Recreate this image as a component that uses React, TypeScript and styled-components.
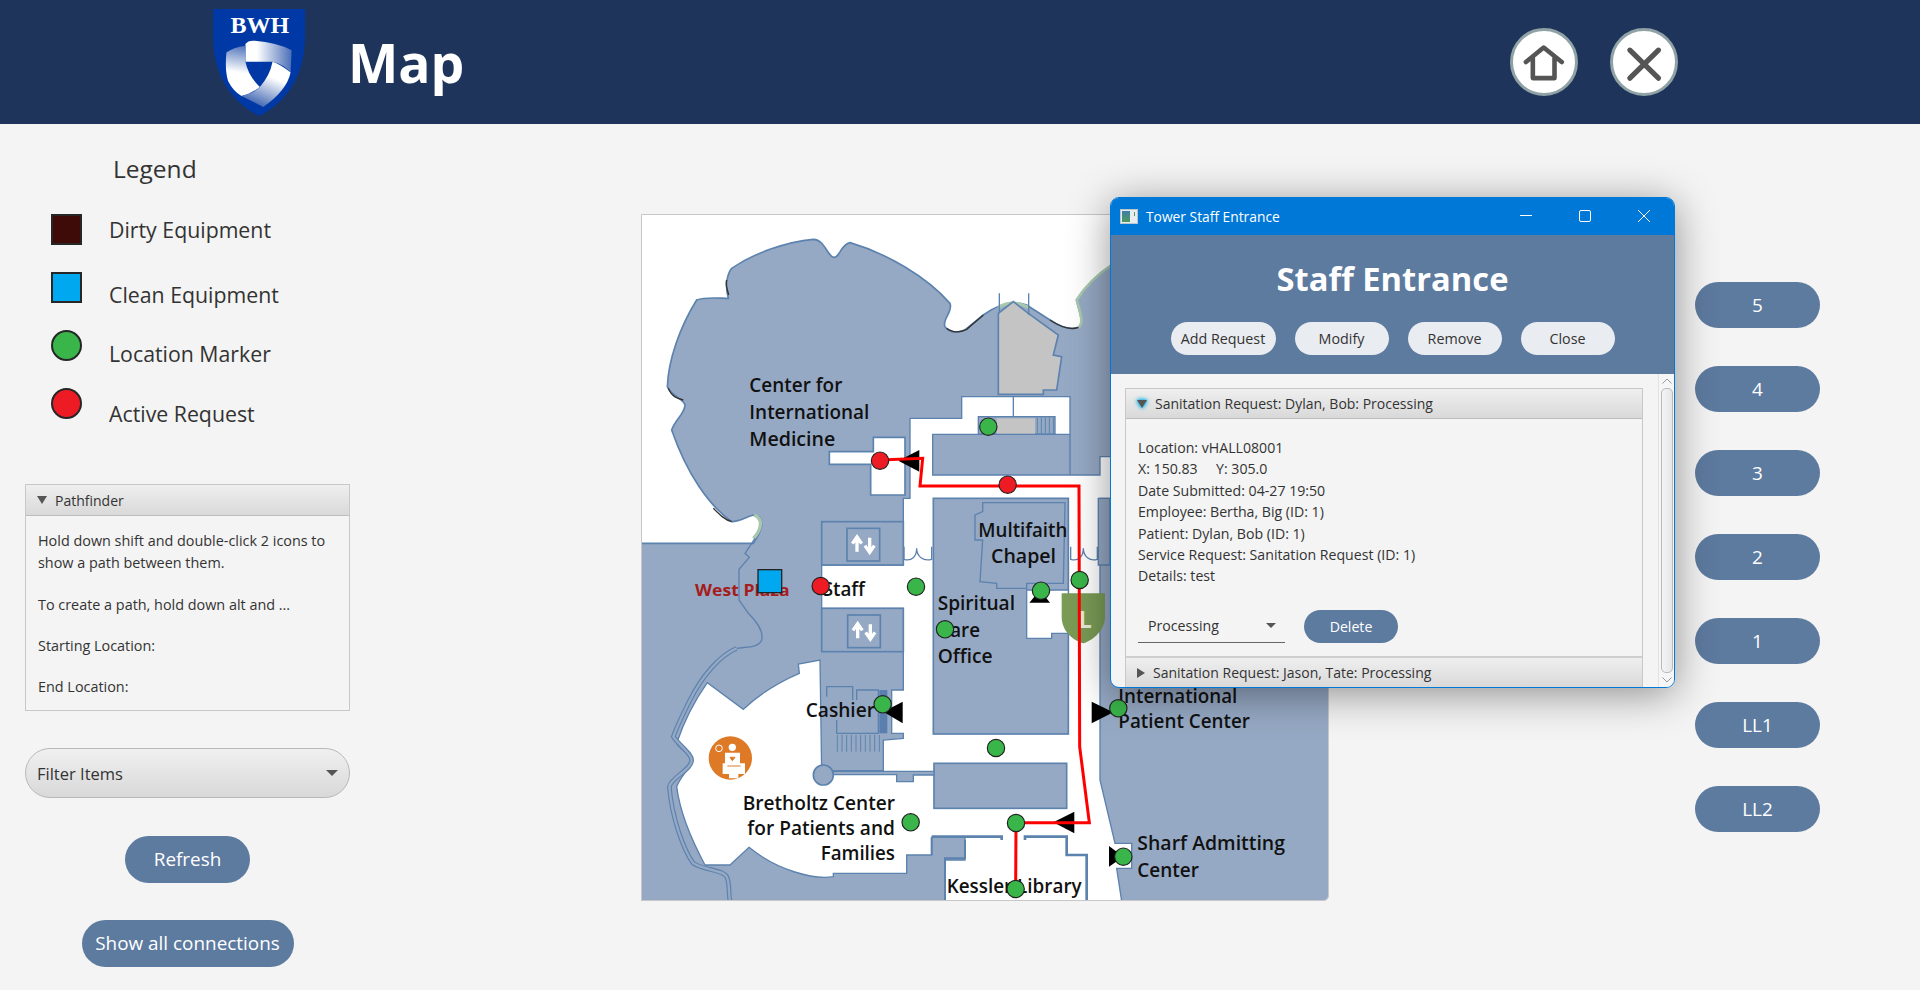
import React from 'react';
import styled, { createGlobalStyle } from 'styled-components';

const GlobalStyle = createGlobalStyle`
  html, body {
    margin: 0;
    padding: 0;
    background: #f4f4f4;
  }
  body {
    font-family: "Open Sans", "Noto Sans", sans-serif;
    color: #333;
    overflow: hidden;
  }
`;

const Page = styled.div`
  position: relative;
  width: 1920px;
  height: 990px;
  overflow: hidden;
  background: #f4f4f4;
`;

const Header = styled.header`
  display: flex;
  align-items: center;
  box-sizing: border-box;
  height: 124px;
  padding: 0 242px 0 213px;
  background: #1f345b;
`;

const Title = styled.h1`
  margin: 0 0 0 43px;
  font-size: 53.4px;
  font-weight: 700;
  color: #fff;
`;

const HeaderActions = styled.div`
  display: flex;
  gap: 32px;
  margin-left: auto;
`;

const RoundButton = styled.button`
  display: flex;
  align-items: center;
  justify-content: center;
  box-sizing: border-box;
  width: 68px;
  height: 68px;
  padding: 0;
  border: 3px solid #8fa2a6;
  border-radius: 50%;
  background: #fff;
`;

const Body = styled.main`
  display: grid;
  grid-template-columns: 641px 688px 1fr;
  height: 866px;
`;

const LeftColumn = styled.aside`
  box-sizing: border-box;
  padding: 28px 0 0 25px;
  width: 350px;
`;

const LegendTitle = styled.div`
  margin: 0 0 28px 88px;
  font-size: 24.5px;
  line-height: 34px;
  color: #333;
`;

const LegendRow = styled.div`
  display: flex;
  height: 58px;
  padding-left: 26px;
`;

const Swatch = styled.span<{ $color: string; $round?: boolean }>`
  box-sizing: border-box;
  width: 31px;
  height: 31px;
  border: 2px solid #262626;
  border-radius: ${(p) => (p.$round ? '50%' : '0')};
  background: ${(p) => p.$color};
`;

const LegendLabel = styled.span<{ $drop: number }>`
  margin: ${(p) => p.$drop}px 0 0 27px;
  font-size: 21.3px;
  line-height: 30px;
  color: #333;
`;

const Panel = styled.section`
  box-sizing: border-box;
  width: 325px;
  margin-top: 38px;
  border: 1px solid #c8c8c8;
  background: #f4f4f4;
`;

const PanelHeader = styled.div<{ $sunk?: boolean }>`
  display: flex;
  align-items: center;
  box-sizing: border-box;
  height: ${(p) => (p.$sunk ? '30px' : '31px')};
  padding-left: 11px;
  gap: 8px;
  border-bottom: 1px solid #bdbdbd;
  background: linear-gradient(#efefef, #d9d9d9);
  font-size: 14px;
  color: #333;
`;

const Arrow = styled.span<{ $open?: boolean; $glow?: boolean }>`
  width: 0;
  height: 0;
  flex: none;
  ${(p) =>
    p.$open
      ? 'border-left: 5.5px solid transparent; border-right: 5.5px solid transparent; border-top: 8px solid #555;'
      : 'border-top: 5.5px solid transparent; border-bottom: 5.5px solid transparent; border-left: 8px solid #555;'}
  ${(p) => (p.$glow ? 'filter: drop-shadow(0 0 2px #12b5e8) drop-shadow(0 0 1px #12b5e8);' : '')}
`;

const PanelBody = styled.div`
  padding: 14px 10px 12px 12px;
  font-size: 14.4px;
  line-height: 22px;
  color: #333;

  p {
    margin: 0 0 19px;
  }
  p:first-child {
    margin-bottom: 20px;
  }
  p:last-child {
    margin: 0;
  }
`;

const FilterSelect = styled.div`
  display: flex;
  align-items: center;
  justify-content: space-between;
  box-sizing: border-box;
  width: 325px;
  height: 50px;
  margin-top: 37px;
  padding: 0 11px 0 11px;
  border: 1px solid #b8b8b8;
  border-radius: 25px;
  background: linear-gradient(#f0f0f0, #d8d8d8);
  font-size: 16.5px;
  color: #333;
`;

const Caret = styled.span`
  width: 0;
  height: 0;
  border-left: 6px solid transparent;
  border-right: 6px solid transparent;
  border-top: 6px solid #555;
`;

const ActionRow = styled.div<{ $top: number }>`
  display: flex;
  justify-content: center;
  width: 325px;
  margin-top: ${(p) => p.$top}px;
`;

const PillButton = styled.button<{ $width: number }>`
  width: ${(p) => p.$width}px;
  height: 47px;
  padding: 0 0 2px;
  border: 0;
  border-radius: 24px;
  background: #5d7a9f;
  font-family: inherit;
  font-size: 18.9px;
  color: #fff;
`;

const FloorButton = styled(PillButton)`
  height: 46px;
  padding: 0;
`;

const MapColumn = styled.div`
  padding-top: 90px;
`;

const MapFrame = styled.svg`
  display: block;
  width: 688px;
  height: 687px;
  border-radius: 0 0 6px 0;
  background: #fff;
  outline: 1px solid #c8c8c8;
  outline-offset: -1px;
  font-family: "Open Sans", "Noto Sans", sans-serif;
`;

const FloorColumn = styled.nav`
  display: flex;
  flex-direction: column;
  align-items: flex-start;
  gap: 38px;
  padding: 158px 0 0 366px;
`;

const Window = styled.section`
  position: absolute;
  top: 197px;
  left: 1110px;
  box-sizing: border-box;
  display: flex;
  flex-direction: column;
  width: 565px;
  height: 491px;
  border: 1px solid #0078d7;
  border-radius: 9px;
  overflow: hidden;
  background: #f4f4f4;
`;

const WindowShadow = styled.div`
  position: absolute;
  top: 197px;
  left: 1110px;
  width: 565px;
  height: 491px;
  border-radius: 9px;
  box-shadow: 0 6px 42px rgba(0, 0, 0, 0.42);
`;

const TitleBar = styled.div`
  display: flex;
  align-items: center;
  flex: none;
  height: 37px;
  padding-left: 9px;
  background: #0078d7;
  font-size: 13.8px;
  color: #fff;
`;

const TitleBarText = styled.span`
  margin: -1px 0 0 8px;
`;

const WindowControls = styled.div`
  display: flex;
  margin: -2px 1px 0 auto;
`;

const WindowControl = styled.span`
  display: flex;
  align-items: center;
  justify-content: center;
  width: 59px;
  height: 37px;
`;

const WindowHead = styled.div`
  display: flex;
  flex-direction: column;
  align-items: center;
  flex: none;
  box-sizing: border-box;
  height: 139px;
  padding-top: 20px;
  background: #5d7a9f;
`;

const WindowHeading = styled.h2`
  margin: 0;
  font-size: 32.7px;
  line-height: 48px;
  font-weight: 700;
  color: #fff;
`;

const HeadButtons = styled.div`
  display: flex;
  gap: 19px;
  margin-top: 19px;
`;

const HeadButton = styled.button<{ $width: number }>`
  width: ${(p) => p.$width}px;
  height: 33px;
  padding: 0 0 1px;
  border: 0;
  border-radius: 17px;
  background: #e9ecf1;
  font-family: inherit;
  font-size: 14.3px;
  color: #333;
`;

const ScrollArea = styled.div`
  display: flex;
  flex: 1;
  min-height: 0;
`;

const Accordion = styled.div`
  box-sizing: border-box;
  width: 518px;
  height: 300px;
  margin: 14px 0 0 14px;
  border: 1px solid #c8c8c8;
  border-bottom: 0;
`;

const RequestBody = styled.div`
  box-sizing: border-box;
  height: 239px;
  padding: 18px 12px 0 12px;
  border-bottom: 2px solid #cfcfcf;
  font-size: 14.15px;
  line-height: 21.4px;
  color: #333;
`;

const RequestLine = styled.div`
  white-space: pre;
`;

const RequestActions = styled.div`
  display: flex;
  align-items: center;
  margin-top: 23px;
`;

const StatusSelect = styled.div`
  display: flex;
  align-items: center;
  justify-content: space-between;
  box-sizing: border-box;
  width: 147px;
  height: 33px;
  padding: 0 9px 0 10px;
  border-bottom: 1px solid #666;
  font-size: 14.15px;
`;

const SmallCaret = styled.span`
  width: 0;
  height: 0;
  border-left: 5px solid transparent;
  border-right: 5px solid transparent;
  border-top: 5px solid #555;
`;

const DeleteButton = styled.button`
  width: 94px;
  height: 33px;
  margin-left: 19px;
  padding: 0;
  border: 0;
  border-radius: 17px;
  background: #5d7a9f;
  font-family: inherit;
  font-size: 14.15px;
  color: #fff;
`;

const ScrollBar = styled.div`
  display: flex;
  flex-direction: column;
  align-items: center;
  box-sizing: border-box;
  width: 16px;
  margin-left: 15px;
  border-left: 1px solid #e2e2e2;
  background: #f6f6f6;
`;

const ScrollChevron = styled.svg`
  flex: none;
  margin: 4px 0;
`;

const ScrollThumb = styled.div`
  flex: 1;
  box-sizing: border-box;
  width: 12px;
  border: 1px solid #b9b9b9;
  border-radius: 5px;
  background: linear-gradient(90deg, #f4f4f4, #e6e6e6);
`;

const BLUE = '#96a9c4';
const EDGE = '#5c82ae';
const WHITE = '#fff';

const Shield = () => (
  <svg width="92" height="107" viewBox="100 25 275 320" aria-hidden>
    <defs>
      <linearGradient id="bladeTop" x1="0" y1="0" x2="1" y2="0">
        <stop offset="0.25" stopColor="#fff" />
        <stop offset="1" stopColor="#4b6fb8" />
      </linearGradient>
      <linearGradient id="bladeLeft" x1="0.6" y1="0" x2="0.5" y2="1">
        <stop offset="0" stopColor="#4f72ba" />
        <stop offset="0.55" stopColor="#fff" />
      </linearGradient>
      <linearGradient id="bladeRight" x1="0.8" y1="0" x2="0.35" y2="1">
        <stop offset="0.35" stopColor="#fff" />
        <stop offset="1" stopColor="#3d63b0" />
      </linearGradient>
    </defs>
    <path d="M100 25H375V110C375 190 345 290 238 345C130 290 100 190 100 110Z" fill="#0039a6" />
    <text x="240" y="97" textAnchor="middle" fontFamily="'Liberation Serif', serif" fontWeight="700" fontSize="72" fill="#fff">
      BWH
    </text>
    <path d="M197 170V130Q205 118 225 120Q290 125 335 148L332 215Q310 190 278 183H197Z" fill="url(#bladeTop)" />
    <path d="M197 135Q160 140 140 155Q135 210 145 240Q160 270 185 285Q215 278 240 258Q205 225 197 183Z" fill="url(#bladeLeft)" />
    <path d="M278 183Q300 190 332 215Q320 270 250 318Q215 300 185 285Q225 275 240 258Q270 225 278 183Z" fill="url(#bladeRight)" />
  </svg>
);

const HomeIcon = () => (
  <svg width="44" height="44" viewBox="125 85 134 134" aria-hidden>
    <path
      d="M137 152L191 108L246 152M158 140V201H224V140"
      fill="none"
      stroke="#555"
      strokeWidth="14"
      strokeLinecap="round"
      strokeLinejoin="round"
    />
  </svg>
);

const CloseIcon = () => (
  <svg width="44" height="44" viewBox="426 85 134 134" aria-hidden>
    <path d="M450 116L537 201M537 116L450 201" fill="none" stroke="#555" strokeWidth="16" strokeLinecap="round" />
  </svg>
);

const WindowIcon = () => (
  <svg width="18" height="15" viewBox="0 0 18 15" aria-hidden>
    <defs>
      <linearGradient id="winIcon" x1="0" y1="0" x2="0" y2="1">
        <stop offset="0" stopColor="#3d7fa8" />
        <stop offset="1" stopColor="#4f9a5c" />
      </linearGradient>
    </defs>
    <rect x="0.5" y="0.5" width="17" height="14" fill="#e6ecef" stroke="#b9c6cc" />
    <rect x="2" y="2" width="8" height="11" fill="url(#winIcon)" />
    <rect x="14" y="3" width="1" height="4" fill="#4f9a5c" />
  </svg>
);

const Marker = ({ x, y, kind = 'green' }: { x: number; y: number; kind?: 'green' | 'red' }) => (
  <circle cx={x} cy={y} r="26" fill={kind === 'green' ? '#39b54a' : '#ed1c24'} stroke="#222" strokeWidth="3.5" />
);

const Label = ({ x, y, width, text }: { x: number; y: number; width: number; text: string }) => (
  <text x={x} y={y} fontSize="61" fontWeight="600" fill="#111" textLength={width} lengthAdjust="spacingAndGlyphs">
    {text}
  </text>
);

const ElevatorBox = ({ x, y }: { x: number; y: number }) => (
  <g>
    <rect x={x} y={y} width="98" height="98" fill={BLUE} stroke={EDGE} strokeWidth="5" />
    <path
      d={`M${x + 30} ${y + 70}V${y + 30}M${x + 16} ${y + 46}L${x + 30} ${y + 26}L${x + 44} ${y + 46}M${x + 68} ${y + 28}V${y + 68}M${x + 54} ${y + 52}L${x + 68} ${y + 72}L${x + 82} ${y + 52}`}
      fill="none"
      stroke="#fff"
      strokeWidth="10"
    />
  </g>
);

const plazaUpperWall = 'M375 1015L345 1060L358 1072L327 1108V1200L355 1240C385 1270 400 1300 395 1320C385 1345 345 1340 320 1345';
const plazaLowerWall =
  'M320 1345C270 1365 215 1430 180 1500C160 1540 140 1580 130 1610C150 1640 185 1660 185 1680C185 1710 125 1730 118 1760C125 1850 160 1950 190 1990C220 2010 280 2010 290 2030C300 2050 295 2080 300 2103';

// coordinates below are the reference crop pixels, so 3 units make 1 screen px
const FloorMap = () => (
  <MapFrame viewBox="33 42 2064 2061">
    <path
      d="M112 560C115 480 150 380 200 300C225 290 270 295 295 295C285 260 290 225 305 205C370 160 470 125 550 118C585 120 590 165 610 172C630 175 630 135 660 128C770 160 890 230 960 310C970 335 935 360 945 380C960 400 985 398 1005 390L1060 345C1100 315 1145 300 1190 315L1260 360C1290 380 1320 392 1345 382C1365 370 1345 330 1340 300C1365 260 1400 225 1445 195H2200V2200H20V1030H370C380 1015 395 990 395 975C395 955 385 945 370 945C350 950 330 965 305 965C235 915 170 820 125 690C135 660 165 640 165 615C160 595 125 590 112 560Z"
      fill={BLUE}
      stroke={EDGE}
      strokeWidth="5"
    />
    <path d="M370 1015C398 985 398 955 372 945" fill="none" stroke="#a8c8ad" strokeWidth="10" />
    <path d="M1105 322C1135 305 1165 305 1195 322" fill="none" stroke="#a8c8ad" strokeWidth="9" />
    <path d="M1345 382C1362 372 1352 340 1340 300C1365 260 1400 225 1445 195" fill="none" stroke="#a8c8ad" strokeWidth="8" />
    <path
      d="M950 385C970 400 990 398 1010 388L1060 345M1260 360C1290 380 1320 392 1345 382M115 565C125 590 140 595 160 600M290 240C285 255 292 265 296 285M250 925C270 945 285 960 305 965"
      fill="none"
      stroke="#333"
      strokeWidth="4"
    />
    <path d="M1105 340L1150 305L1195 340L1285 405L1270 465L1295 470L1280 570H1240V583H1105Z" fill="#c4c4c4" stroke={EDGE} strokeWidth="5" />
    <path d="M1108 280V340M1196 280V345" stroke={EDGE} strokeWidth="4" />
    <path d="M598 755H730V712H825V885H722V793H598Z" fill={WHITE} stroke={EDGE} strokeWidth="5" />
    <path
      d="M840 655H995V590H1320V703H908V825H1410V770H1500V895H1410V1740L1455 1930H1505V2005H1460L1475 2103H945V1980H1005V1912H905V1965H830V2020H610V2030C550 2040 440 2010 357 1942L300 1995H225C190 1930 150 1840 140 1760C150 1730 185 1700 185 1680C185 1660 150 1650 140 1630C160 1570 195 1500 232 1448L340 1528C390 1480 450 1445 508 1420L505 1392L570 1380L575 1712H760V1620L820 1615V1600H785V1470H820V1225H575V1095H820V895H840Z"
      fill={WHITE}
      stroke={EDGE}
      strokeWidth="4"
    />
    <path d="M1320 703V825M1150 590V650" stroke={EDGE} strokeWidth="4" />
    <rect x="1045" y="650" width="230" height="52" fill={BLUE} stroke={EDGE} strokeWidth="4" />
    <rect x="1100" y="655" width="115" height="46" fill="#c4c4c4" />
    <path d="M1222 652V700M1234 652V700M1246 652V700M1258 652V700M1270 652V700" stroke={EDGE} strokeWidth="3" />
    <rect x="910" y="895" width="405" height="707" fill={BLUE} stroke={EDGE} strokeWidth="5" />
    <path
      d="M1058 908H1305L1300 1150H1190V1165H1100V1150L1050 1145L1058 1020H1035V945L1058 935Z"
      fill="none"
      stroke={EDGE}
      strokeWidth="4"
    />
    <path d="M1190 1170V1315H1265V1300H1315V1170Z" fill={WHITE} stroke={EDGE} strokeWidth="4" />
    <rect x="912" y="1690" width="398" height="135" fill={BLUE} stroke={EDGE} strokeWidth="5" />
    <path d="M822 1040V1078C845 1085 860 1070 860 1045C860 1070 880 1085 905 1078V1040" fill="none" stroke={EDGE} strokeWidth="4" />
    <path d="M1322 1040V1078C1345 1085 1360 1070 1360 1045C1360 1070 1380 1085 1402 1078V1040" fill="none" stroke={EDGE} strokeWidth="4" />
    <path d="M1405 895H1440V1095H1405Z" fill={BLUE} stroke={EDGE} strokeWidth="4" />

    <rect x="575" y="965" width="245" height="130" fill={BLUE} stroke={EDGE} strokeWidth="5" />
    <ElevatorBox x={651} y={985} />
    <rect x="575" y="1225" width="245" height="130" fill={BLUE} stroke={EDGE} strokeWidth="5" />
    <ElevatorBox x={653} y={1245} />

    <path d="M590 1490V1460H668V1500M680 1500V1470H745V1600H620V1560" fill="none" stroke={EDGE} strokeWidth="4" />
    <rect x="748" y="1470" width="24" height="130" fill="#5a7fae" />
    <path
      d="M622 1605V1655M636 1605V1655M650 1605V1655M664 1605V1655M678 1605V1655M692 1605V1655M706 1605V1655M720 1605V1655M734 1605V1655M748 1605V1655"
      stroke={EDGE}
      strokeWidth="3"
    />
    <path d="M610 1714H912V1725H850V1745H800V1724H610Z" fill={BLUE} stroke={EDGE} strokeWidth="4" />
    <circle cx="580" cy="1725" r="30" fill={BLUE} stroke={EDGE} strokeWidth="5" />
    <path d={plazaUpperWall} fill="none" stroke={EDGE} strokeWidth="4" />
    <path d={plazaLowerWall} fill="none" stroke={EDGE} strokeWidth="14" />
    <path d={plazaLowerWall} fill="none" stroke={BLUE} strokeWidth="7" />
    <path d="M905 1910H1115V1920M1185 1920V1910H1310V1965H1370V2103" fill="none" stroke={EDGE} strokeWidth="8" />
    <path d="M905 1912V1965M1005 1920V1975H945V2103" fill="none" stroke={EDGE} strokeWidth="6" />

    <path d="M1295 1180H1425V1250C1425 1290 1390 1320 1360 1330C1325 1320 1295 1290 1295 1250Z" fill="#7a9b56" />
    <text x="1345" y="1285" fontSize="72" fontWeight="700" fill="#e6ecd9">L</text>

    <circle cx="301" cy="1674" r="65" fill="#de7a26" />
    <g fill="#fff">
      <circle cx="307" cy="1642" r="11" />
      <path d="M285 1658H330V1690H345V1722H325V1735H297V1722H278V1690H285Z" />
    </g>
    <circle cx="267" cy="1645" r="10" fill="none" stroke="#fff" strokeWidth="3" />
    <path d="M300 1672H315L307 1682ZM292 1698H332" fill="#de7a26" stroke="#de7a26" strokeWidth="3" />

    <Label x={358} y={575} width={279} text="Center for" />
    <Label x={358} y={657} width={360} text="International" />
    <Label x={358} y={737} width={258} text="Medicine" />
    <text x={195} y={1187} fontSize="50" fontWeight="700" fill="#a51c1c" textLength={284} lengthAdjust="spacingAndGlyphs">
      West Plaza
    </text>
    <Label x={578} y={1187} width={127} text="Staff" />
    <Label x={1045} y={1010} width={267} text="Multifaith" />
    <Label x={1083} y={1090} width={195} text="Chapel" />
    <Label x={923} y={1230} width={232} text="Spiritual" />
    <Label x={925} y={1310} width={125} text="Care" />
    <Label x={923} y={1390} width={165} text="Office" />
    <Label x={527} y={1550} width={208} text="Cashier" />
    <Label x={338} y={1830} width={457} text="Bretholtz Center" />
    <Label x={352} y={1905} width={443} text="for Patients and" />
    <Label x={572} y={1980} width={223} text="Families" />
    <Label x={950} y={2078} width={405} text="Kessler Library" />
    <Label x={1465} y={1508} width={357} text="International" />
    <Label x={1465} y={1585} width={395} text="Patient Center" />
    <Label x={1522} y={1950} width={443} text="Sharf Admitting" />
    <Label x={1522} y={2032} width={185} text="Center" />

    <rect x="384" y="1109" width="71" height="69" fill="#00a8f0" stroke="#222" strokeWidth="4" />

    <path d="M805 782L868 750V815Z" fill="#000" />
    <path d="M760 1535L818 1505V1570Z" fill="#000" />
    <path d="M1270 1867L1333 1835V1900Z" fill="#000" />
    <path d="M1385 1505V1570L1450 1537Z" fill="#000" />
    <path d="M1437 1938V2000L1480 1970Z" fill="#000" />
    <path d="M1198 1208H1260L1230 1170Z" fill="#000" />

    <path
      d="M750 780L878 775L870 858H1347L1349 1640L1378 1868H1158L1157 2067"
      fill="none"
      stroke="#f00"
      strokeWidth="9"
    />

    <Marker x={750} y={782} kind="red" />
    <Marker x={1133} y={854} kind="red" />
    <Marker x={572} y={1158} kind="red" />
    <Marker x={1075} y={680} />
    <Marker x={858} y={1160} />
    <Marker x={1349} y={1140} />
    <Marker x={1233} y={1172} />
    <Marker x={945} y={1288} />
    <Marker x={758} y={1513} />
    <Marker x={1098} y={1644} />
    <Marker x={842} y={1867} />
    <Marker x={1158} y={1869} />
    <Marker x={1157} y={2067} />
    <Marker x={1465} y={1525} />
    <Marker x={1480} y={1970} />
  </MapFrame>
);

const legendRows = [
  { label: 'Dirty Equipment', color: '#3f0b08', drop: 1 },
  { label: 'Clean Equipment', color: '#00a8f0', drop: 8 },
  { label: 'Location Marker', color: '#39b54a', drop: 9, round: true },
  { label: 'Active Request', color: '#ed1c24', drop: 11, round: true },
];

const floors = ['5', '4', '3', '2', '1', 'LL1', 'LL2'];

const requestLines = [
  'Location: vHALL08001',
  'X: 150.83     Y: 305.0',
  'Date Submitted: 04-27 19:50',
  'Employee: Bertha, Big (ID: 1)',
  'Patient: Dylan, Bob (ID: 1)',
  'Service Request: Sanitation Request (ID: 1)',
  'Details: test',
];

export default function App() {
  return (
    <Page>
      <GlobalStyle />
      <Header>
        <Shield />
        <Title>Map</Title>
        <HeaderActions>
          <RoundButton>
            <HomeIcon />
          </RoundButton>
          <RoundButton>
            <CloseIcon />
          </RoundButton>
        </HeaderActions>
      </Header>
      <Body>
        <LeftColumn>
          <LegendTitle>Legend</LegendTitle>
          {legendRows.map((row) => (
            <LegendRow key={row.label}>
              <Swatch $color={row.color} $round={row.round} />
              <LegendLabel $drop={row.drop}>{row.label}</LegendLabel>
            </LegendRow>
          ))}
          <Panel>
            <PanelHeader>
              <Arrow $open />
              Pathfinder
            </PanelHeader>
            <PanelBody>
              <p>Hold down shift and double-click 2 icons to show a path between them.</p>
              <p>To create a path, hold down alt and ...</p>
              <p>Starting Location:</p>
              <p>End Location:</p>
            </PanelBody>
          </Panel>
          <FilterSelect>
            Filter Items
            <Caret />
          </FilterSelect>
          <ActionRow $top={38}>
            <PillButton $width={125}>Refresh</PillButton>
          </ActionRow>
          <ActionRow $top={37}>
            <PillButton $width={212}>Show all connections</PillButton>
          </ActionRow>
        </LeftColumn>
        <MapColumn>
          <FloorMap />
        </MapColumn>
        <FloorColumn>
          {floors.map((floor) => (
            <FloorButton key={floor} $width={125}>
              {floor}
            </FloorButton>
          ))}
        </FloorColumn>
      </Body>
      <WindowShadow />
      <Window>
        <TitleBar>
          <WindowIcon />
          <TitleBarText>Tower Staff Entrance</TitleBarText>
          <WindowControls>
            <WindowControl>
              <svg width="12" height="12" viewBox="0 0 12 12" aria-hidden>
                <path d="M0 5.5H12" stroke="#fff" />
              </svg>
            </WindowControl>
            <WindowControl>
              <svg width="12" height="12" viewBox="0 0 12 12" aria-hidden>
                <rect x="0.5" y="0.5" width="11" height="11" rx="1.5" fill="none" stroke="#fff" />
              </svg>
            </WindowControl>
            <WindowControl>
              <svg width="12" height="12" viewBox="0 0 12 12" aria-hidden>
                <path d="M0 0L12 12M12 0L0 12" stroke="#fff" />
              </svg>
            </WindowControl>
          </WindowControls>
        </TitleBar>
        <WindowHead>
          <WindowHeading>Staff Entrance</WindowHeading>
          <HeadButtons>
            <HeadButton $width={105}>Add Request</HeadButton>
            <HeadButton $width={94}>Modify</HeadButton>
            <HeadButton $width={94}>Remove</HeadButton>
            <HeadButton $width={94}>Close</HeadButton>
          </HeadButtons>
        </WindowHead>
        <ScrollArea>
          <Accordion>
            <PanelHeader $sunk>
              <Arrow $open $glow />
              Sanitation Request: Dylan, Bob: Processing
            </PanelHeader>
            <RequestBody>
              {requestLines.map((line) => (
                <RequestLine key={line}>{line}</RequestLine>
              ))}
              <RequestActions>
                <StatusSelect>
                  Processing
                  <SmallCaret />
                </StatusSelect>
                <DeleteButton>Delete</DeleteButton>
              </RequestActions>
            </RequestBody>
            <PanelHeader $sunk>
              <Arrow />
              Sanitation Request: Jason, Tate: Processing
            </PanelHeader>
          </Accordion>
          <ScrollBar>
            <ScrollChevron width="10" height="6" viewBox="0 0 10 6" aria-hidden>
              <path d="M0.5 5.5L5 1L9.5 5.5" fill="none" stroke="#999" />
            </ScrollChevron>
            <ScrollThumb />
            <ScrollChevron width="10" height="6" viewBox="0 0 10 6" aria-hidden>
              <path d="M0.5 0.5L5 5L9.5 0.5" fill="none" stroke="#999" />
            </ScrollChevron>
          </ScrollBar>
        </ScrollArea>
      </Window>
    </Page>
  );
}
